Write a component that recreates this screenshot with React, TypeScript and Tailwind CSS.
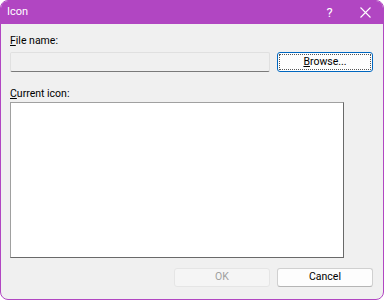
export default function App() {
    return (
        <div className="w-[384px] h-[300px] bg-white" style={{ fontFamily: 'Roboto, "Noto Sans", sans-serif' }}>
            <div className="w-full h-full flex flex-col rounded-[8px] border border-[#b146c2] bg-[#f0f0f0] overflow-hidden">
                {/* Title bar */}
                <div className="h-[23px] bg-[#b146c2] flex items-center text-white shrink-0">
                    <span className="pl-[6px] text-[11px] flex-1">Icon</span>
                    <span className="w-[37px] text-center text-[13px] leading-none">?</span>
                    <span className="w-[35px] flex justify-center">
                        <svg width="11" height="11" viewBox="0 0 11 11" stroke="white" strokeWidth="1.1">
                            <path d="M0.5 0.5 L10.5 10.5 M10.5 0.5 L0.5 10.5" />
                        </svg>
                    </span>
                </div>

                {/* Body */}
                <div className="flex-1 flex flex-col px-[9px] pt-[10px] text-[10.5px] text-black">
                    <div className="leading-[14px]"><span className="underline">F</span>ile name:</div>
                    <div className="flex gap-[7px] mt-[4px]">
                        <div className="w-[260px] h-[20px] bg-[#f0f0f0] border border-[#e0e0e0] border-b-[#7a7a7a] rounded-[2px]" />
                        <button className="w-[96px] h-[20px] bg-[#fdfdfd] border border-[#0067c0] rounded-[3px] p-[1px]">
                            <div className="w-full h-full border border-dotted border-[#555] flex items-center justify-center text-[10.5px] leading-none">
                                <span><span className="underline">B</span>rowse...</span>
                            </div>
                        </button>
                    </div>
                    <div className="leading-[14px] mt-[15px]"><span className="underline">C</span>urrent icon:</div>
                    <div className="w-[334px] h-[156px] mt-[1px] bg-white border border-[#a0a0a0] border-r-[#696969] border-b-[#696969]" />
                    <div className="flex justify-end gap-[7px] mt-[10px] pr-[1px]">
                        <button className="w-[96px] h-[19px] bg-[#f5f5f5] border border-[#e5e5e5] rounded-[3px] text-[#a0a0a0] text-[10.5px] leading-none">OK</button>
                        <button className="w-[96px] h-[19px] bg-[#fdfdfd] border border-[#d0d0d0] border-b-[#b5b5b5] rounded-[3px] text-black text-[10.5px] leading-none">Cancel</button>
                    </div>
                </div>
            </div>
        </div>
    );
}
